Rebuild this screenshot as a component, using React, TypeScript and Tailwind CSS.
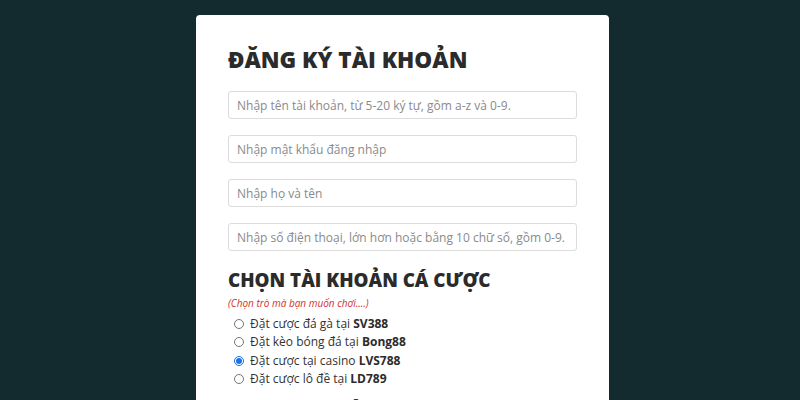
const fields = [
  "Nhập tên tài khoản, từ 5-20 ký tự, gồm a-z và 0-9.",
  "Nhập mật khẩu đăng nhập",
  "Nhập họ và tên",
  "Nhập số điện thoại, lớn hơn hoặc bằng 10 chữ số, gồm 0-9.",
];

const options = [
  { label: "Đặt cược đá gà tại", brand: "SV388" },
  { label: "Đặt kèo bóng đá tại", brand: "Bong88" },
  { label: "Đặt cược tại casino", brand: "LVS788" },
  { label: "Đặt cược lô đề tại", brand: "LD789" },
];

export default function App() {
  return (
    <div
      className="h-[400px] overflow-hidden bg-[#132a2f] pt-[15px]"
      style={{ fontFamily: '"Open Sans", "Noto Sans", sans-serif' }}
    >
      <div className="ml-[196px] w-[413px] rounded-[4px] bg-white px-[32px] pt-[28px] pb-6">
        <h1 className="text-[22.5px] leading-[34px] font-extrabold text-[#2b2b2b]">
          ĐĂNG KÝ TÀI KHOẢN
        </h1>

        <div className="mt-[14px] flex flex-col gap-[16px]">
          {fields.map((f) => (
            <input
              key={f}
              type="text"
              placeholder={f}
              className="h-[28px] w-full rounded-[3px] border border-[#dcdcdc] px-[8px] text-[12px] text-[#555] placeholder:text-[#8a8a8a] outline-none"
            />
          ))}
        </div>

        <h2 className="mt-[15px] text-[18.8px] leading-[28px] font-extrabold text-[#2b2b2b]">
          CHỌN TÀI KHOẢN CÁ CƯỢC
        </h2>
        <p className="mt-[2px] text-[10px] leading-[14px] italic text-[#d0312d]">
          (Chọn trò mà bạn muốn chơi....)
        </p>

        <div className="mt-[5px] flex flex-col">
          {options.map((o, i) => (
            <label
              key={o.brand}
              className="flex h-[18.3px] items-center pl-[6px] text-[12px] text-[#333]"
            >
              <input
                type="radio"
                name="site"
                defaultChecked={i === 2}
                className="m-0 mr-[6px] h-[10px] w-[10px] accent-[#1a73e8]"
              />
              <span>
                {o.label} <b className="font-bold text-[#2b2b2b]">{o.brand}</b>
              </span>
            </label>
          ))}
        </div>

        <p className="mt-[8px] pl-[25px] text-[13px] font-bold text-[#333]">
          Quà tặng hấp dẫn
        </p>
      </div>
    </div>
  );
}
